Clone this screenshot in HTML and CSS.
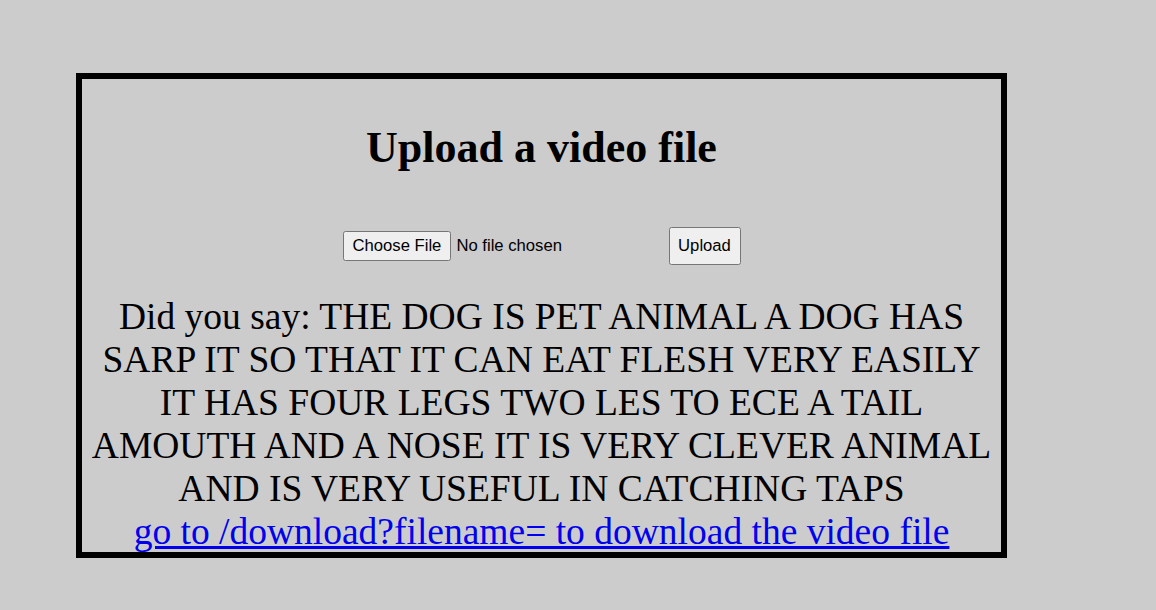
FILE: index.html
```html
<!DOCTYPE html>
<html>
<head>
<meta charset="utf-8">
<link rel="stylesheet" href="styles.css">
</head>
<body>
<div class="box">
  <h1 class="title">Upload a video file</h1>
  <form class="upload-form">
    <input class="file-input" type="file">
    <button class="upload-btn" type="button">Upload</button>
  </form>
  <p class="result">Did you say: THE DOG IS PET ANIMAL A DOG HAS SARP IT SO THAT IT CAN EAT FLESH VERY EASILY IT HAS FOUR LEGS TWO LES TO ECE A TAIL AMOUTH AND A NOSE IT IS VERY CLEVER ANIMAL AND IS VERY USEFUL IN CATCHING TAPS<br><a class="dl-link" href="#">go to /download?filename= to download the video file</a></p>
</div>
</body>
</html>
```
FILE: styles.css
```css
html, body {
  margin: 0;
  padding: 0;
  background: #cccccc;
}
body {
  padding-top: 73px;
  padding-left: 76px;
  font-family: "Liberation Serif", "Times New Roman", serif;
}
.box {
  box-sizing: border-box;
  width: 931px;
  height: 485px;
  border: 6px solid #000;
  padding: 0 6px;
  display: flex;
  flex-direction: column;
  align-items: center;
}
.title {
  margin: 44px 0 0;
  font-size: 44px;
  line-height: 50px;
  font-weight: bold;
  color: #000;
}
.upload-form {
  margin-top: 54px;
  display: flex;
  align-items: center;
  gap: 73px;
}
.file-input {
  width: 253px;
  font-family: Arial, "Liberation Sans", sans-serif;
  font-size: 16.67px;
}
.file-input::file-selector-button {
  padding: 3px 8px;
  margin-right: 5px;
}
.upload-btn {
  width: 72px;
  height: 38px;
  padding: 0;
  font-family: Arial, "Liberation Sans", sans-serif;
  font-size: 16.67px;
}
.result {
  margin: 30px 0 0;
  font-size: 37.5px;
  line-height: 43px;
  text-align: center;
  color: #000;
}
.dl-link {
  color: #0000ee;
}
```
